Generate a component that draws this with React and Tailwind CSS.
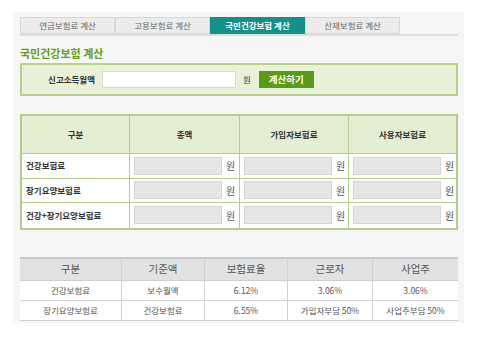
import React from "react";

const font = { fontFamily: '"Noto Sans CJK KR", "Noto Sans", sans-serif' };
const cols1 = "grid grid-cols-[108px_110px_109px_107px]";

function Cell({ last }) {
  return (
    <div className={`flex items-center gap-[4px] pl-[4px] border-[#b4cc8c] ${last ? "" : "border-r"}`}>
      <div className="w-[88px] h-[18px] bg-[#e6e6e6] border border-[#d4d4d4]" />
      <span className="text-[10px] text-[#555]">원</span>
    </div>
  );
}

function Row({ label, last }) {
  return (
    <div className={`${cols1} h-[24.5px] bg-white border-[#b4cc8c] ${last ? "" : "border-b"}`}>
      <div className="flex items-center pl-[4px] text-[8.5px] font-bold text-[#333] border-r border-[#b4cc8c]">{label}</div>
      <Cell />
      <Cell />
      <Cell last />
    </div>
  );
}

export default function App() {
  const tabs = ["연금보험료 계산", "고용보험료 계산", "국민건강보험 계산", "산재보험료 계산"];
  return (
    <div className="w-[479px] h-[339px] bg-white pt-[12px] pl-[13px]" style={font}>
      <div className="w-[451px] h-[311px] bg-[#f6f6f6] pt-[5px] pl-[7px]">
        <div className="flex w-[438px] h-[17px] border-b-2 border-[#dedede] box-content">
          {tabs.map((t, i) => (
            <div
              key={t}
              className={`w-[95px] h-[17px] flex items-center justify-center text-[8.5px] ${
                i === 2
                  ? "bg-[#148f8a] text-white font-bold"
                  : "bg-[#ececec] text-[#666] border border-[#d8d8d8]"
              }`}
            >
              {t}
            </div>
          ))}
        </div>
        <div className="mt-[10px] text-[11px] font-bold text-[#5c9e1e] leading-[14px]">국민건강보험 계산</div>
        <div className="mt-[3px] w-[438px] h-[33px] bg-[#eaf1da] border-2 border-[#b9cf8e] flex items-center">
          <div className="w-[73px] text-right text-[8.5px] font-bold text-[#333]">신고소득월액</div>
          <div className="ml-[7px] w-[134px] h-[17px] bg-white border border-[#d6dcc8]" />
          <span className="ml-[7px] text-[8.5px] text-[#333]">원</span>
          <div className="ml-[8px] w-[55px] h-[17px] bg-[#5b9a17] text-white text-[9.5px] font-bold flex items-center justify-center">
            계산하기
          </div>
        </div>
        <div className="mt-[18px] w-[438px] border-2 border-[#b4cc8c]">
          <div className={`${cols1} h-[38px] bg-[#e4eed3] border-b border-[#b4cc8c] text-[8.5px] font-bold text-[#333]`}>
            <div className="flex items-center justify-center border-r border-[#b4cc8c]">구분</div>
            <div className="flex items-center justify-center border-r border-[#b4cc8c]">총액</div>
            <div className="flex items-center justify-center border-r border-[#b4cc8c]">가입자보험료</div>
            <div className="flex items-center justify-center">사용자보험료</div>
          </div>
          <Row label="건강보험료" />
          <Row label="장기요양보험료" />
          <Row label="건강+장기요양보험료" last />
        </div>
        <div className="mt-[27px] w-[438px] border-t-2 border-[#c8c8c8] text-[#555]">
          <div className="grid grid-cols-[102px_83px_83px_85px_85px] h-[22px] bg-[#e2e2e2] text-[10.5px] border-b border-[#cfcfcf]">
            {["구분", "기준액", "보험료율", "근로자", "사업주"].map((h, i) => (
              <div key={h} className={`flex items-center justify-center ${i < 4 ? "border-r border-[#cfcfcf]" : ""}`}>{h}</div>
            ))}
          </div>
          {[
            ["건강보험료", "보수월액", "6.12%", "3.06%", "3.06%"],
            ["장기요양보험료", "건강보험료", "6.55%", "가입자부담 50%", "사업주부담 50%"],
          ].map((r) => (
            <div key={r[0]} className="grid grid-cols-[102px_83px_83px_85px_85px] h-[20px] bg-white text-[8.5px] border-b border-[#cfcfcf]">
              {r.map((c, i) => (
                <div key={i} className={`flex items-center justify-center ${i < 4 ? "border-r border-[#cfcfcf]" : ""}`}>{c}</div>
              ))}
            </div>
          ))}
        </div>
      </div>
    </div>
  );
}
